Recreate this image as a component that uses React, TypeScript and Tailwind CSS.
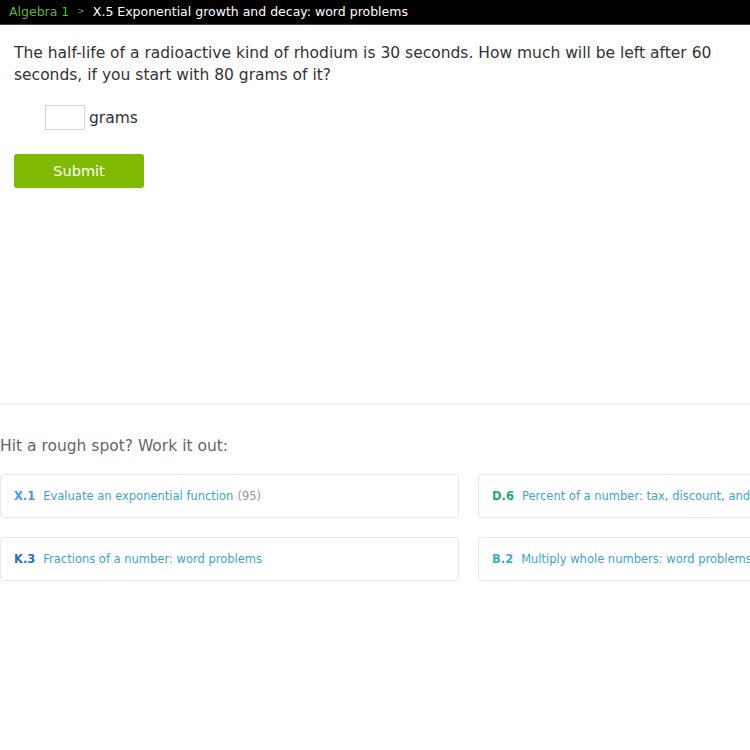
const skills = [
  [
    { code: "X.1", codeColor: "text-[#4a98d8]", name: "Evaluate an exponential function", count: "(95)" },
    { code: "D.6", codeColor: "text-[#1fa874]", name: "Percent of a number: tax, discount, and more", count: "" },
  ],
  [
    { code: "K.3", codeColor: "text-[#2b6fae]", name: "Fractions of a number: word problems", count: "" },
    { code: "B.2", codeColor: "text-[#38adc9]", name: "Multiply whole numbers: word problems", count: "" },
  ],
];

export default function App() {
  return (
    <div
      className="w-[750px] h-[750px] overflow-hidden bg-white text-[#333]"
      style={{ fontFamily: "'DejaVu Sans', Verdana, sans-serif" }}
    >
      {/* breadcrumb */}
      <div className="h-[25px] bg-black border-b border-[#444] flex items-center pl-[9px] text-[12.5px] whitespace-nowrap">
        <span className="text-[#5fb336]">Algebra 1</span>
        <span className="text-[#888] text-[9px] mx-[8px]">&gt;</span>
        <span className="text-white">X.5 Exponential growth and decay: word problems</span>
      </div>

      {/* question */}
      <div className="px-[14px] pt-[16px]">
        <p className="text-[15.5px] leading-[22px] text-[#333] w-[720px] pt-[1px]">
          The half-life of a radioactive kind of rhodium is 30 seconds. How much will be left after 60
          seconds, if you start with 80 grams of it?
        </p>
        <div className="flex items-center gap-[4px] mt-[18px] ml-[31px]">
          <input className="w-[40px] h-[25px] border border-[#d3d3d3] outline-none" />
          <span className="text-[15.5px] text-[#333] pt-[3px]">grams</span>
        </div>
        <button className="mt-[24px] w-[130px] h-[34px] rounded-[3px] bg-[#7fba00] text-white text-[14.5px] pt-[2px]">
          Submit
        </button>
      </div>

      <div className="mt-[215px] border-t-2 border-[#f2f2f2]" />

      {/* related skills */}
      <div className="pt-[30px]">
        <p className="text-[15.5px] text-[#666]">Hit a rough spot? Work it out:</p>
        <div className="mt-[15px] flex flex-col gap-[19px] w-[800px]">
          {skills.map((row, i) => (
            <div key={i} className="flex gap-[19px]">
              {row.map((s) => (
                <div
                  key={s.code}
                  className="w-[459px] h-[44px] shrink-0 border border-[#e8e8e8] rounded-[4px] flex items-center px-[13px] pt-[3px] text-[11.5px] whitespace-nowrap overflow-hidden"
                >
                  <span className={`font-bold ${s.codeColor}`}>{s.code}</span>
                  <span className="ml-[8px] text-[#3fa4c9]">{s.name}</span>
                  {s.count && <span className="ml-[4px] text-[#999]">{s.count}</span>}
                </div>
              ))}
            </div>
          ))}
        </div>
      </div>
    </div>
  );
}
